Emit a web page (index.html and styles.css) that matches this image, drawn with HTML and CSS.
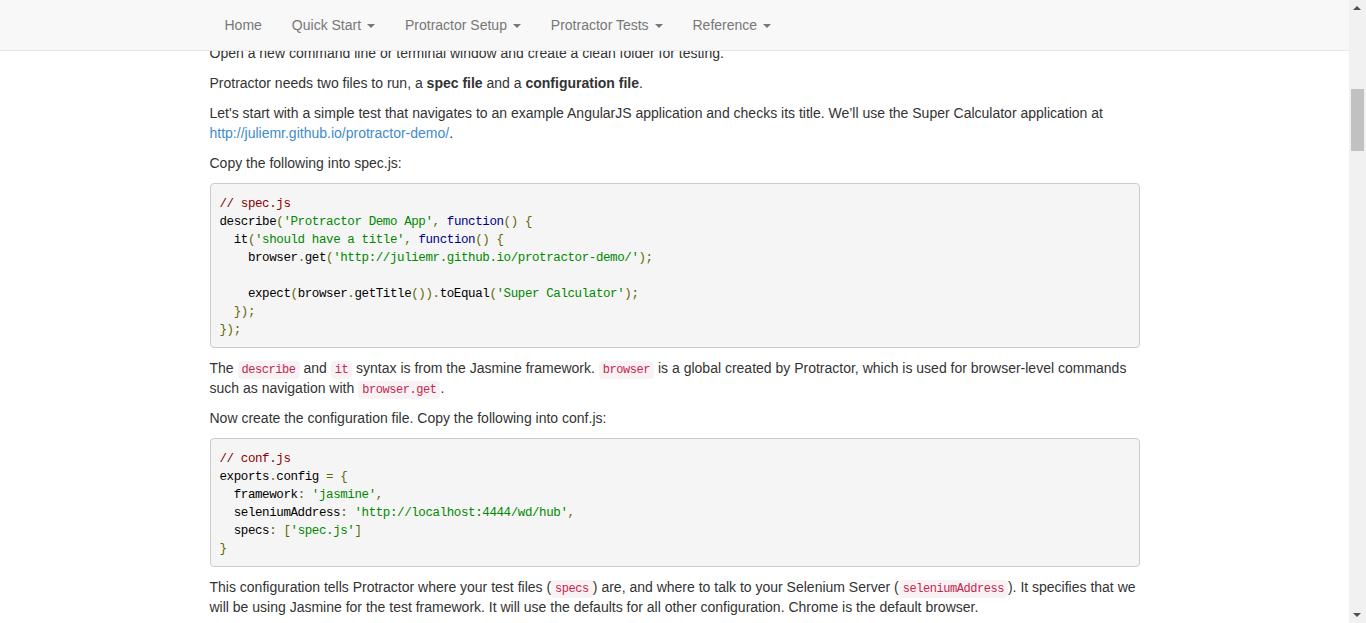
FILE: index.html
```html
<!DOCTYPE html>
<html lang="en">
<head>
<meta charset="utf-8">
<title>Protractor - Tutorial</title>
<link rel="stylesheet" href="styles.css">
</head>
<body>
<nav class="navbar">
  <div class="container">
    <ul class="nav">
      <li><a href="#">Home</a></li>
      <li><a href="#">Quick Start <span class="caret"></span></a></li>
      <li><a href="#">Protractor Setup <span class="caret"></span></a></li>
      <li><a href="#">Protractor Tests <span class="caret"></span></a></li>
      <li><a href="#">Reference <span class="caret"></span></a></li>
    </ul>
  </div>
</nav>

<main class="page">
  <div class="container">
    <p>Open a new command line or terminal window and create a clean folder for testing.</p>
    <p>Protractor needs two files to run, a <strong>spec file</strong> and a <strong>configuration file</strong>.</p>
    <p>Let's start with a simple test that navigates to an example AngularJS application and checks its title. We’ll use the Super Calculator application at <a href="#">http://juliemr.github.io/protractor-demo/</a>.</p>
    <p>Copy the following into spec.js:</p>
<pre><span class="com">// spec.js</span>
<span class="pln">describe</span><span class="pun">(</span><span class="str">'Protractor Demo App'</span><span class="pun">,</span> <span class="kwd">function</span><span class="pun">()</span> <span class="pun">{</span>
  <span class="pln">it</span><span class="pun">(</span><span class="str">'should have a title'</span><span class="pun">,</span> <span class="kwd">function</span><span class="pun">()</span> <span class="pun">{</span>
    <span class="pln">browser</span><span class="pun">.</span><span class="pln">get</span><span class="pun">(</span><span class="str">'http://juliemr.github.io/protractor-demo/'</span><span class="pun">);</span>

    <span class="pln">expect</span><span class="pun">(</span><span class="pln">browser</span><span class="pun">.</span><span class="pln">getTitle</span><span class="pun">()).</span><span class="pln">toEqual</span><span class="pun">(</span><span class="str">'Super Calculator'</span><span class="pun">);</span>
  <span class="pun">});</span>
<span class="pun">});</span></pre>
    <p>The <code>describe</code> and <code>it</code> syntax is from the Jasmine framework. <code>browser</code> is a global created by Protractor, which is used for browser-level commands such as navigation with <code>browser.get</code>.</p>
    <p>Now create the configuration file. Copy the following into conf.js:</p>
<pre><span class="com">// conf.js</span>
<span class="pln">exports</span><span class="pun">.</span><span class="pln">config</span> <span class="pun">=</span> <span class="pun">{</span>
  <span class="pln">framework</span><span class="pun">:</span> <span class="str">'jasmine'</span><span class="pun">,</span>
  <span class="pln">seleniumAddress</span><span class="pun">:</span> <span class="str">'http://localhost:4444/wd/hub'</span><span class="pun">,</span>
  <span class="pln">specs</span><span class="pun">:</span> <span class="pun">[</span><span class="str">'spec.js'</span><span class="pun">]</span>
<span class="pun">}</span></pre>
    <p>This configuration tells Protractor where your test files (<code>specs</code>) are, and where to talk to your Selenium Server (<code>seleniumAddress</code>). It specifies that we will be using Jasmine for the test framework. It will use the defaults for all other configuration. Chrome is the default browser.</p>
    <p>Now run the test with</p>
  </div>
</main>

<div class="scrollbar" aria-hidden="true">
  <div class="sb-arrow sb-up"></div>
  <div class="sb-track"><div class="sb-thumb"></div></div>
  <div class="sb-arrow sb-down"></div>
</div>
</body>
</html>
```

FILE: styles.css
```css
html, body {
  margin: 0;
  height: 100%;
  overflow: hidden;
}
body {
  font-family: "Liberation Sans", Arial, sans-serif;
  font-size: 14px;
  line-height: 20px;
  color: #333;
  background: #fff;
}
.container {
  width: 930px;
  margin: 0 auto;
}

/* navbar */
.navbar {
  position: fixed;
  top: 0;
  left: 0;
  right: 17px;
  height: 50px;
  background: #f8f8f8;
  border-bottom: 1px solid #e7e7e7;
  z-index: 10;
}
.nav {
  list-style: none;
  margin: 0;
  padding: 0;
  display: flex;
}
.nav a {
  display: block;
  padding: 15px;
  line-height: 20px;
  color: #777;
  text-decoration: none;
}
.caret {
  display: inline-block;
  width: 0;
  height: 0;
  margin-left: 2px;
  vertical-align: middle;
  border-top: 4px solid #777;
  border-left: 4px solid transparent;
  border-right: 4px solid transparent;
}

/* page */
.page {
  width: calc(100% - 17px);
  padding-top: 43px;
}
p {
  margin: 0 0 10px;
}
strong { font-weight: bold; }
a { color: #428bca; text-decoration: none; }

pre {
  margin: 0 0 10px;
  padding: 11px 9px 8px;
  font-family: "Liberation Mono", "DejaVu Sans Mono", monospace;
  font-size: 12.5px;
  letter-spacing: -0.4px;
  line-height: 18px;
  color: #333;
  background: #f5f5f5;
  border: 1px solid #ccc;
  border-radius: 4px;
  white-space: pre;
}
.com { color: #800; }
.str { color: #080; }
.kwd { color: #008; }
.pun { color: #660; }
.pln { color: #000; }

code {
  font-family: "Liberation Mono", "DejaVu Sans Mono", monospace;
  font-size: 12px;
  letter-spacing: -0.45px;
  line-height: 1;
  padding: 2px 4px;
  color: #c7254e;
  background: #f9f2f4;
  border-radius: 4px;
}

/* fake scrollbar */
.scrollbar {
  position: fixed;
  top: 0;
  right: 0;
  width: 17px;
  height: 100%;
  background: #f1f1f1;
  display: flex;
  flex-direction: column;
}
.sb-arrow {
  height: 17px;
  flex: none;
  position: relative;
}
.sb-up::after, .sb-down::after {
  content: "";
  position: absolute;
  left: 4px;
  width: 0;
  height: 0;
  border-left: 4px solid transparent;
  border-right: 4px solid transparent;
}
.sb-up::after {
  top: 6px;
  border-bottom: 4px solid #505050;
}
.sb-down::after {
  top: 7px;
  border-top: 4px solid #505050;
}
.sb-track {
  flex: 1;
  padding: 72px 2px 0;
}
.sb-thumb {
  height: 62px;
  background: #c1c1c1;
}
```
